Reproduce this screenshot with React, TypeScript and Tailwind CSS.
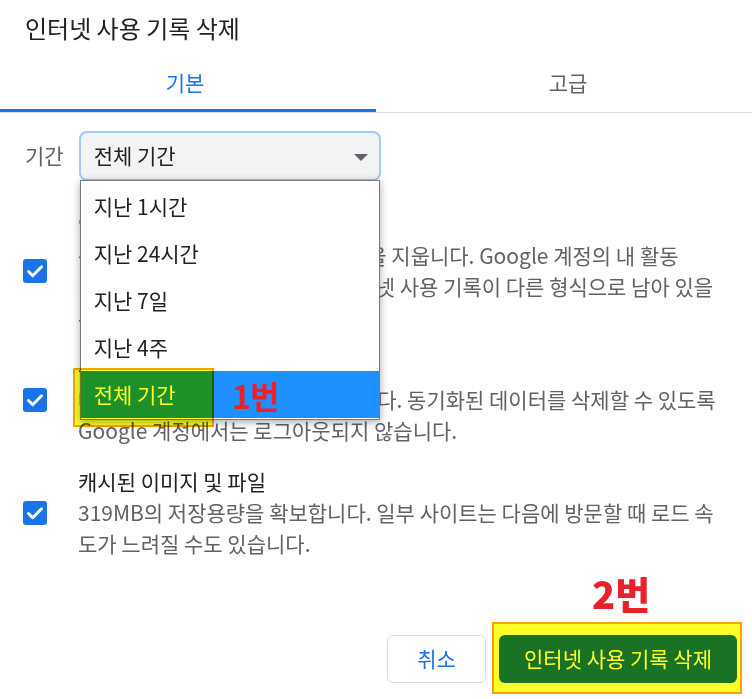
import React from "react";

const Check = () => (
  <svg width="24" height="24" viewBox="0 0 24 24" className="shrink-0">
    <rect x="0" y="0" width="24" height="24" rx="3" fill="#1a73e8" />
    <path d="M5.5 12.5l4.2 4.2L18.5 7.8" fill="none" stroke="#fff" strokeWidth="3" strokeLinecap="round" strokeLinejoin="round" />
  </svg>
);

export default function App() {
  const font = { fontFamily: '"Noto Sans CJK KR", Roboto, sans-serif' };
  return (
    <div className="relative w-[752px] h-[699px] bg-white overflow-hidden" style={font}>
      <div className="h-[56px] flex items-center pl-[25px] text-[24px] text-[#202124]">인터넷 사용 기록 삭제</div>

      <div className="flex border-b border-[#dadce0]">
        <div className="flex-1 flex flex-col">
          <div className="h-[53px] flex items-center justify-center pr-[6px] text-[21px] text-[#1a73e8]">기본</div>
          <div className="h-[3px] bg-[#1a73e8]" />
        </div>
        <div className="flex-1 flex flex-col">
          <div className="h-[53px] flex items-center justify-center pl-[8px] text-[21px] text-[#5f6368]">고급</div>
          <div className="h-[3px]" />
        </div>
      </div>

      <div className="flex items-center mt-[18px] pl-[25px] gap-[15px]">
        <span className="text-[21px] text-[#5f6368]">기간</span>
        <div className="relative w-[302px] h-[50px] rounded-[8px] border-2 border-[#a8c7fa] bg-[#f1f3f4] flex items-center pl-[13px] pr-[11px]">
          <span className="text-[21px] text-[#202124]">전체 기간</span>
          <svg width="14" height="8" viewBox="0 0 14 8" className="ml-auto mt-[3px]">
            <polygon points="0,0 14,0 7,7" fill="#5f6368" />
          </svg>
          <div className="absolute left-[-1px] top-[47px] w-[300px] z-10 bg-white border border-[#7a7a7a] shadow-[0_2px_8px_rgba(0,0,0,0.35)] pt-[2px] pb-[1px]">
            {["지난 1시간", "지난 24시간", "지난 7일", "지난 4주"].map((t) => (
              <div key={t} className="h-[47px] flex items-center pl-[13px] text-[21px] text-[#202124]">{t}</div>
            ))}
            <div className="h-[47px] flex items-center pl-[13px] text-[21px] text-white bg-[#1e90ff]">전체 기간</div>
          </div>
        </div>
      </div>

      <div className="mt-[28px] flex flex-col gap-[20px]">
        <div className="flex items-center">
          <div className="ml-[23px]"><Check /></div>
          <div className="ml-[31px] text-[21px] leading-[31px] text-[#5f6368] whitespace-nowrap">
            <div className="text-[#202124]">인터넷 사용 기록</div>
            <div>동기화된 모든 기기에서 방문 기록을 지웁니다. Google 계정의 내 활동</div>
            <div>(myactivity.google.com)에 인터넷 사용 기록이 다른 형식으로 남아 있을</div>
            <div>수 있습니다.</div>
          </div>
        </div>
        <div className="flex items-center">
          <div className="ml-[23px]"><Check /></div>
          <div className="ml-[31px] text-[21px] leading-[31px] text-[#5f6368] whitespace-nowrap">
            <div className="text-[#202124]">쿠키 및 기타 사이트 데이터</div>
            <div>대부분의 사이트에서 로그아웃됩니다. 동기화된 데이터를 삭제할 수 있도록</div>
            <div>Google 계정에서는 로그아웃되지 않습니다.</div>
          </div>
        </div>
        <div className="flex items-center">
          <div className="ml-[23px]"><Check /></div>
          <div className="ml-[31px] text-[21px] leading-[31px] text-[#5f6368] whitespace-nowrap">
            <div className="text-[#202124]">캐시된 이미지 및 파일</div>
            <div>319MB의 저장용량을 확보합니다. 일부 사이트는 다음에 방문할 때 로드 속</div>
            <div>도가 느려질 수도 있습니다.</div>
          </div>
        </div>
      </div>

      <div className="mt-[76px] flex justify-end pr-[15px] gap-[13px]">
        <button className="w-[99px] h-[48px] rounded-[6px] border border-[#dadce0] bg-white text-[21px] text-[#1a73e8]">취소</button>
        <button className="w-[238px] h-[48px] rounded-[6px] bg-[#1a73e8] text-[21px] text-white">인터넷 사용 기록 삭제</button>
      </div>

      <div className="absolute left-[73px] top-[368px] w-[141px] h-[59px] z-20 bg-[#ffff28] border-2 border-[#f7a400] mix-blend-multiply" />
      <div className="absolute left-[492px] top-[622px] w-[250px] h-[72px] z-20 bg-[#ffff28] border-2 border-[#f7a400] mix-blend-multiply" />

      <div className="absolute left-[232px] top-[379px] z-30 text-[32px] font-bold text-[#e8212b] leading-none tracking-[-1px]">1번</div>
      <div className="absolute left-[592px] top-[574px] z-30 text-[38px] font-black text-[#e8212b] leading-none">2번</div>
    </div>
  );
}
